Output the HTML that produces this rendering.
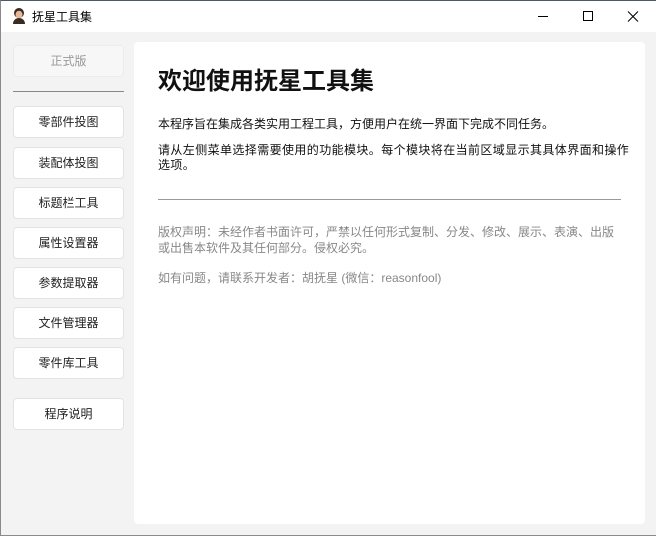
<!DOCTYPE html>
<html><head><meta charset="utf-8"><style>
*{margin:0;padding:0;box-sizing:border-box}
body{width:656px;height:536px;overflow:hidden;background:#f3f3f3;font-family:"Liberation Sans","Microsoft YaHei","Noto Sans CJK SC",sans-serif;position:relative}
.win{position:absolute;left:0;top:0;width:656px;height:536px;border-left:1px solid #8a8a8a;border-bottom:1px solid #8a8a8a;border-top:1px solid #4a5a66}
.title{position:absolute;left:0;top:0;width:656px;height:31px;background:#fff}
.title .t{position:absolute;left:31px;top:7px;font-size:12px;color:#000}
.btn{position:absolute;left:12px;width:111px;height:32px;background:#fff;border:1px solid #e3e3e3;border-radius:4px;font-size:12px;color:#222;text-align:center;line-height:30px}
.panel{position:absolute;left:133px;top:41px;width:511px;height:482px;background:#fff;border-radius:4px}
.p{position:absolute;left:24px;font-size:12px;white-space:nowrap;line-height:15px}
</style></head><body><div class="win">
<div class="title">
<svg style="position:absolute;left:10px;top:6px" width="16" height="18" viewBox="0 0 16 18"><ellipse cx="8" cy="6" rx="5" ry="5" fill="#3a2a22"/><ellipse cx="8" cy="7.5" rx="3.5" ry="3.8" fill="#e8b89a"/><path d="M2 17c0-4 3-6 6-6s6 2 6 6z" fill="#3a2a22"/></svg>
<div class="t">抚星工具集</div>
<svg style="position:absolute;left:532px;top:8px" width="110" height="16"><line x1="5" y1="7.5" x2="15" y2="7.5" stroke="#000"/><rect x="50.5" y="2.5" width="9" height="9" fill="none" stroke="#000"/><path d="M95 2.5l10 10M105 2.5l-10 10" stroke="#000"/></svg>
</div>
<div class="btn" style="top:44px;color:#999;border-color:#ececec;background:#f7f7f7">正式版</div>
<div style="position:absolute;left:12px;top:90px;width:111px;height:1px;background:#888"></div>
<div class="btn" style="top:105px">零部件投图</div>
<div class="btn" style="top:146px">装配体投图</div>
<div class="btn" style="top:186px">标题栏工具</div>
<div class="btn" style="top:226px">属性设置器</div>
<div class="btn" style="top:266px">参数提取器</div>
<div class="btn" style="top:306px">文件管理器</div>
<div class="btn" style="top:346px">零件库工具</div>
<div class="btn" style="top:397px">程序说明</div>
<div class="panel">
<div class="p" style="top:25px;font-size:24px;font-weight:bold;line-height:30px;color:#111">欢迎使用抚星工具集</div>
<div class="p" style="top:75px;color:#111">本程序旨在集成各类实用工程工具，方便用户在统一界面下完成不同任务。</div>
<div class="p" style="top:101px;color:#111;letter-spacing:0.4px">请从左侧菜单选择需要使用的功能模块。每个模块将在当前区域显示其具体界面和操作<br>选项。</div>
<div style="position:absolute;left:24px;top:157px;width:463px;height:1px;background:#999"></div>
<div class="p" style="top:182px;color:#888;line-height:16px">版权声明：未经作者书面许可，严禁以任何形式复制、分发、修改、展示、表演、出版<br>或出售本软件及其任何部分。侵权必究。</div>
<div class="p" style="top:229px;color:#888">如有问题，请联系开发者：胡抚星 (微信：reasonfool)</div>
</div>
</div></body></html>
